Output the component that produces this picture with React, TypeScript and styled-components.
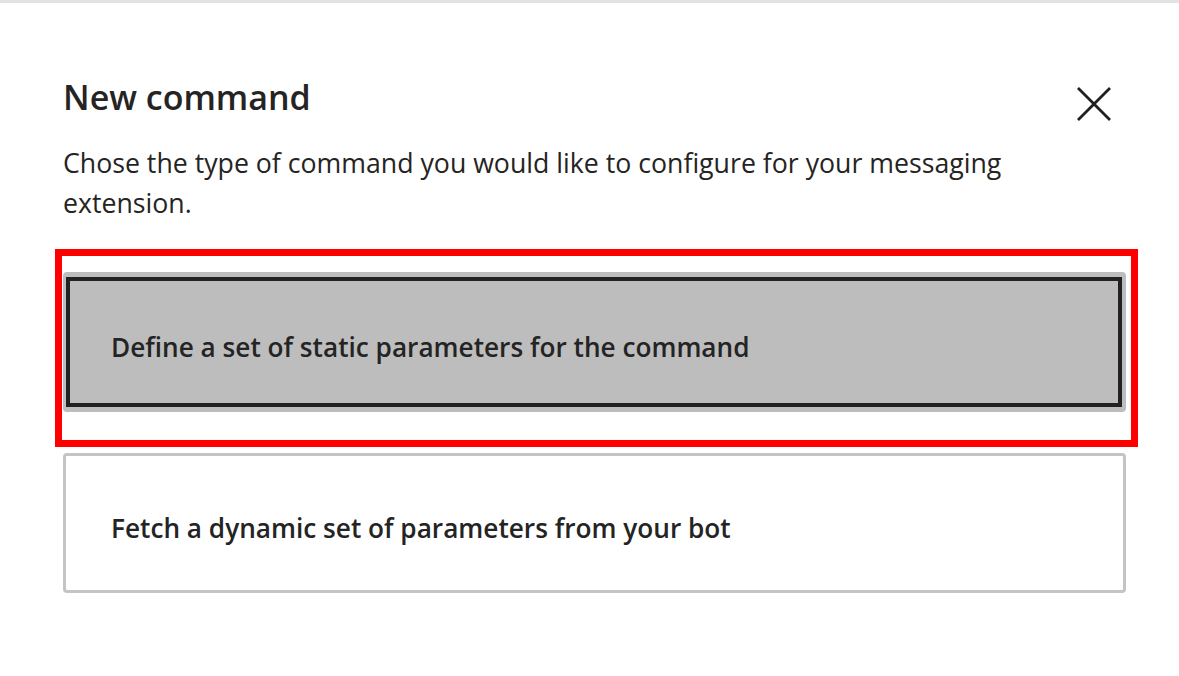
import React from "react";
import styled, { createGlobalStyle } from "styled-components";

const Global = createGlobalStyle`
  html, body { margin: 0; padding: 0; background: #ffffff; }
  body { font-family: "Open Sans", "Noto Sans", Arial, sans-serif; color: #242424; }
`;

const Page = styled.div`
  width: 1179px;
  height: 676px;
  box-sizing: border-box;
  border-top: 3px solid #e2e2e2;
  overflow: hidden;
`;

const Dialog = styled.div`
  padding: 71px 53px 0 63px;
  display: flex;
  flex-direction: column;
`;

const Header = styled.div`
  display: flex;
  align-items: flex-start;
  justify-content: space-between;
`;

const Title = styled.h1`
  margin: 0;
  font-size: 34px;
  line-height: 46px;
  font-weight: 600;
  color: #252423;
`;

const CloseButton = styled.button`
  width: 36px;
  height: 36px;
  margin: 12px 14px 0 0;
  padding: 0;
  border: none;
  background: transparent;
  display: flex;
  align-items: center;
  justify-content: center;
  cursor: pointer;
`;

const Description = styled.p`
  margin: 21px 0 0 0;
  font-size: 26.7px;
  line-height: 40px;
  color: #252423;
  max-width: 1000px;
`;

const Options = styled.div`
  margin-top: 49px;
  display: flex;
  flex-direction: column;
  gap: 41px;
`;

const Highlight = styled.div`
  position: relative;
  &::before {
    content: "";
    position: absolute;
    top: -23px;
    left: -8px;
    right: -12px;
    bottom: -35px;
    border: 7px solid #ff0000;
    pointer-events: none;
  }
`;

const OptionCard = styled.button<{ $active?: boolean }>`
  position: relative;
  width: 100%;
  height: 140px;
  box-sizing: border-box;
  display: flex;
  align-items: center;
  padding: 10px 0 0 45px;
  border: 3px solid ${(p) => (p.$active ? "#bdbdbd" : "#c4c4c4")};
  border-radius: 4px;
  background: ${(p) => (p.$active ? "#bdbdbd" : "#ffffff")};
  font-family: inherit;
  font-size: 26.2px;
  font-weight: 600;
  color: #242424;
  text-align: left;
  cursor: pointer;
  ${(p) =>
    p.$active
      ? `&::after {
    content: "";
    position: absolute;
    top: 2px;
    left: 0px;
    right: 1px;
    bottom: 2px;
    border: 4px solid #222222;
    pointer-events: none;
  }`
      : ""}
`;

const CloseIcon = () => (
  <svg width="34" height="34" viewBox="0 0 34 34" fill="none">
    <path d="M1 1 L33 33 M33 1 L1 33" stroke="#1f1f1f" strokeWidth="2.8" />
  </svg>
);

export default function App() {
  return (
    <Page>
      <Global />
      <Dialog>
        <Header>
          <Title>New command</Title>
          <CloseButton aria-label="Close">
            <CloseIcon />
          </CloseButton>
        </Header>
        <Description>
          Chose the type of command you would like to configure for your messaging extension.
        </Description>
        <Options>
          <Highlight>
            <OptionCard $active>Define a set of static parameters for the command</OptionCard>
          </Highlight>
          <OptionCard>Fetch a dynamic set of parameters from your bot</OptionCard>
        </Options>
      </Dialog>
    </Page>
  );
}
